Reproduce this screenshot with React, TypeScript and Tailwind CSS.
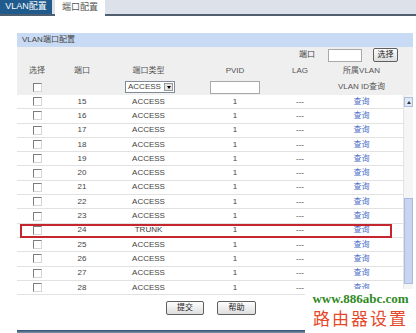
import React from "react";

const rows = Array.from({ length: 14 }, (_, i) => 15 + i);

function Check() {
  return (
    <span className="inline-block w-[9px] h-[9px] bg-white border border-t-[#7d7d7d] border-l-[#7d7d7d] border-r-[#d6d6d6] border-b-[#d6d6d6]" />
  );
}

function Btn({ children, w }: { children: React.ReactNode; w: string }) {
  return (
    <div
      className={`${w} h-[14px] flex items-center justify-center text-[8px] text-[#222] rounded-[2px] border border-[#5f5f5f] bg-gradient-to-b from-[#fdfdfd] to-[#dedede]`}
    >
      {children}
    </div>
  );
}

const cols = "grid grid-cols-[40px_50px_83px_90px_40px_83px]";

export default function App() {
  return (
    <div
      className="relative w-[416px] h-[333px] bg-white overflow-hidden text-[#444]"
      style={{ fontFamily: '"Liberation Sans", "Noto Sans CJK SC", sans-serif' }}
    >
      {/* top tabs */}
      <div className="flex h-[16px]">
        <div className="w-[52px] border-b-2 border-[#4f5f70] bg-[#1f5b8c] flex items-center justify-center text-white text-[9px] leading-none pb-[1px]">
          VLAN配置
        </div>
        <div className="w-[3px] bg-[#dde2ea] border-b-2 border-[#4f5f70]" />
        <div className="w-[50px] bg-white flex items-center justify-center text-[9px] text-[#555] leading-none pb-[2px]">
          端口配置
        </div>
        <div className="flex-1 bg-[#dde2ea] border-b-2 border-[#4f5f70]" />
      </div>

      {/* panel */}
      <div className="ml-[17px] mt-[17px] w-[396px]">
        <div className="h-[14px] bg-[#c9dbf4] flex items-center pl-[5px] text-[8px] text-[#444]">
          VLAN端口配置
        </div>
        <div className="bg-[#efefef]">
          <div className="h-[16px] flex items-center justify-end pr-[15px] text-[8px]">
            <span className="mr-[13px]">端口</span>
            <span className="w-[34px] h-[13px] bg-white border border-[#a9a9a9]" />
            <span className="ml-[11px]">
              <Btn w="w-[25px]">选择</Btn>
            </span>
          </div>
          <div className={`${cols} h-[16px] items-center text-center text-[8px] text-[#555]`}>
            <div>选择</div>
            <div>端口</div>
            <div>端口类型</div>
            <div>PVID</div>
            <div>LAG</div>
            <div>所属VLAN</div>
          </div>
          <div className={`${cols} h-[16px] items-center text-center text-[8px]`}>
            <div className="flex justify-center">
              <Check />
            </div>
            <div />
            <div className="flex justify-center pl-[3px]">
              <div className="w-[50px] h-[12px] bg-white border border-[#7f8b99] flex items-center">
                <span className="flex-1 text-left pl-[2px] leading-none">ACCESS</span>
                <span className="w-[9px] h-[8px] mr-[1px] bg-[#e4e4e4] border border-[#9a9a9a] flex items-center justify-center">
                  <span className="w-0 h-0 border-l-[2.5px] border-r-[2.5px] border-t-[3px] border-l-transparent border-r-transparent border-t-black" />
                </span>
              </div>
            </div>
            <div className="flex justify-center">
              <span className="w-[50px] h-[13px] bg-white border border-[#a9a9a9]" />
            </div>
            <div />
            <div className="text-[#555]">VLAN ID查询</div>
          </div>
        </div>

        {/* data rows */}
        <div className="flex">
          <div className="w-[386px]">
            {rows.map((n) => (
              <div
                key={n}
                className={`${cols} relative h-[14.3px] items-center text-center text-[8px] bg-white border-b border-[#e2e2e2]`}
              >
                <div className="flex justify-center">
                  <Check />
                </div>
                <div>{n}</div>
                <div>{n === 24 ? "TRUNK" : "ACCESS"}</div>
                <div>1</div>
                <div>---</div>
                <div className="text-[#4a6cc8]">查询</div>
                {n === 24 && (
                  <span className="absolute left-[3px] right-[11px] top-[0px] bottom-[-1px] border-2 border-[#c5252c]" />
                )}
              </div>
            ))}
          </div>
          <div className="w-[10px] bg-[#f5f5f5] border-l border-[#e4e4e4] flex flex-col pt-[2px]">
            <div className="h-[10px] bg-[#dfe8f7] border border-[#aebfe0] flex items-center justify-center">
              <span className="w-0 h-0 border-l-[2.5px] border-r-[2.5px] border-b-[3px] border-l-transparent border-r-transparent border-b-[#333]" />
            </div>
            <div className="flex-1" />
            <div className="h-[86px] bg-[#c8d5f0] border border-[#a9bbe0]" />
            <div className="h-[11px] bg-[#f5f5f5]" />
          </div>
        </div>

        {/* buttons */}
        <div className="flex pl-[149px] gap-[13px] mt-[6px]">
          <Btn w="w-[38px]">提交</Btn>
          <Btn w="w-[39px]">帮助</Btn>
        </div>
        <div className="mt-[15px] h-[3px] bg-gradient-to-b from-[#2e4f70] to-[#7d93a9]" />
      </div>

      {/* watermark */}
      <div className="absolute right-0 bottom-0 w-[111px] h-[44px] bg-white flex flex-col items-center">
        <div
          className="text-[13px] font-bold text-[#2f8a1f] leading-none mt-[3px]"
          style={{ fontFamily: '"Liberation Serif", serif' }}
        >
          www.886abc.com
        </div>
        <div
          className="text-[17px] text-[#e5472a] leading-none mt-[4px] tracking-[2px]"
          style={{ fontFamily: '"Noto Sans CJK SC", serif' }}
        >
          路由器设置
        </div>
      </div>
    </div>
  );
}
